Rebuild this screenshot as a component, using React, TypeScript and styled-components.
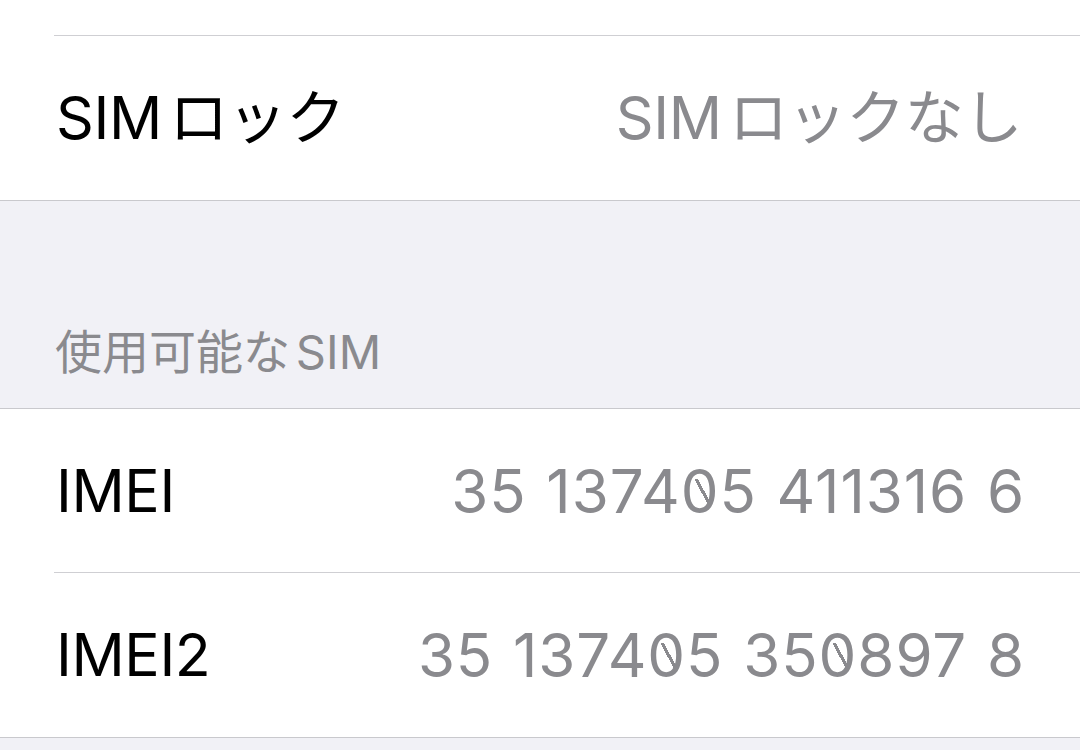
import React from "react";
import styled, { createGlobalStyle } from "styled-components";

const GlobalStyle = createGlobalStyle`
  html, body {
    margin: 0;
    padding: 0;
    background: #f1f1f6;
    overflow: hidden;
  }
  body {
    font-family: Inter, "Noto Sans CJK JP", sans-serif;
    -webkit-font-smoothing: antialiased;
    text-autospace: normal;
  }
`;

const Screen = styled.div`
  width: 1080px;
  height: 750px;
  background: #f1f1f6;
  display: flex;
  flex-direction: column;
`;

const Group = styled.div`
  background: #ffffff;
  border-bottom: 1.5px solid #c9c9cd;
  display: flex;
  flex-direction: column;
`;

const GroupTop = styled(Group)`
  border-top: 1.5px solid #c9c9cd;
`;

const Row = styled.div<{ $height: number }>`
  padding-left: 54px;
  height: ${(p) => p.$height}px;
  display: flex;

  &:not(:last-child) > div {
    border-bottom: 1.5px solid #cfcfd3;
  }
`;

const Cell = styled.div`
  flex: 1;
  display: flex;
  align-items: center;
  justify-content: space-between;
  padding: 0 58px 0 2px;
  line-height: 72px;
`;

const Label = styled.span`
  font-size: 59px;
  color: #000000;
  letter-spacing: -0.4px;
`;

const Value = styled.span`
  font-size: 59px;
  color: #8a8a8e;
  letter-spacing: -0.4px;
`;

const Digits = styled(Value)`
  font-size: 60px;
  letter-spacing: 0.9px;
  word-spacing: 2px;
  margin-right: -3px;
`;

// zero with a diagonal stroke painted behind the glyph's counter
const Zero = styled.span`
  display: inline-block;
  background-image: linear-gradient(
    62deg,
    transparent 44%,
    #8a8a8e 44%,
    #8a8a8e 56%,
    transparent 56%
  );
  background-size: 16px 26px;
  background-position: 14px 24px;
  background-repeat: no-repeat;
`;

const SectionHeader = styled.div`
  height: 207px;
  display: flex;
  align-items: flex-end;
  padding: 0 0 26px 55px;
  box-sizing: border-box;
  font-size: 47px;
  line-height: 60px;
  color: #8a8a8e;
`;

type Item = { label: string; value: string; mono?: boolean };

const simRows: Item[] = [{ label: "SIMロック", value: "SIMロックなし" }];

const imeiRows: Item[] = [
  { label: "IMEI", value: "35 137405 411316 6", mono: true },
  { label: "IMEI2", value: "35 137405 350897 8", mono: true },
];

const renderDigits = (value: string) =>
  value.split("").map((ch, i) => (ch === "0" ? <Zero key={i}>0</Zero> : ch));

const SettingRow = ({ label, value, mono }: Item) => (
  <Row $height={164}>
    <Cell>
      <Label>{label}</Label>
      {mono ? <Digits>{renderDigits(value)}</Digits> : <Value>{value}</Value>}
    </Cell>
  </Row>
);

export default function App() {
  return (
    <>
      <GlobalStyle />
      <Screen>
        <Group>
          <Row $height={36}>
            <Cell />
          </Row>
          {simRows.map((r) => (
            <SettingRow key={r.label} {...r} />
          ))}
        </Group>

        <SectionHeader>使用可能なSIM</SectionHeader>

        <GroupTop>
          {imeiRows.map((r) => (
            <SettingRow key={r.label} {...r} />
          ))}
        </GroupTop>
      </Screen>
    </>
  );
}
